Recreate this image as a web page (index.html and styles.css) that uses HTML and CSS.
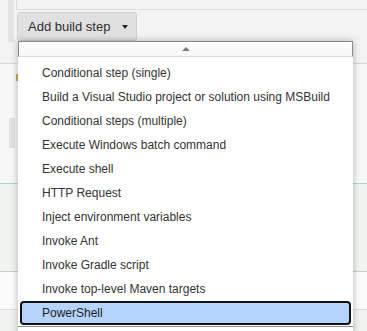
FILE: index.html
```html
<!DOCTYPE html>
<html>
<head>
<meta charset="utf-8">
<link rel="stylesheet" href="styles.css">
</head>
<body>
<div class="page">
  <div class="top">
    <div class="bar"></div>
    <div class="main">
      <div class="panel"></div>
      <button class="btn">Add build step<span class="caret"></span></button>
    </div>
  </div>
  <div class="sec sec1">
    <div class="mark"></div>
    <div class="block"></div>
  </div>
  <div class="sec sec2"></div>
  <div class="sec sec3"></div>
  <div class="sec sec4"></div>

  <div class="menu">
    <div class="scroll-up"><span class="up"></span></div>
    <ul class="items">
      <li>Conditional step (single)</li>
      <li>Build a Visual Studio project or solution using MSBuild</li>
      <li>Conditional steps (multiple)</li>
      <li>Execute Windows batch command</li>
      <li>Execute shell</li>
      <li>HTTP Request</li>
      <li>Inject environment variables</li>
      <li>Invoke Ant</li>
      <li>Invoke Gradle script</li>
      <li>Invoke top-level Maven targets</li>
      <li class="selected">PowerShell</li>
    </ul>
    <div class="scroll-down"></div>
  </div>
</div>
</body>
</html>
```
FILE: styles.css
```css
html, body {
  margin: 0;
  padding: 0;
}
body {
  background: #f3f3f3;
  font-family: "Liberation Sans", Arial, sans-serif;
  overflow: hidden;
}
.page {
  position: relative;
  width: 367px;
  height: 331px;
  overflow: hidden;
}
.top {
  height: 63px;
  display: flex;
  align-items: flex-start;
}
.bar {
  margin-left: 8px;
  width: 6px;
  height: 42px;
  background: #e3e3e3;
}
.main {
  margin-left: 2px;
  flex: 1;
}
.panel {
  height: 9px;
  border-left: 1px solid #dcdcdc;
  border-bottom: 1px solid #dcdcdc;
  background: #f4f4f4;
}
.btn {
  margin: 2px 0 0 1px;
  height: 29px;
  display: flex;
  align-items: center;
  padding: 0 8px 0 10px;
  background: #e0e0e0;
  border: 1px solid #cfcfcf;
  border-radius: 3px;
  font-family: "Liberation Sans", Arial, sans-serif;
  font-size: 13px;
  color: #2e2e35;
}
.caret {
  display: inline-block;
  margin-left: 12px;
  margin-top: 1px;
  border-left: 3px solid transparent;
  border-right: 3px solid transparent;
  border-top: 4px solid #222;
}
.sec {
  border-top: 1px solid #d8d8d8;
}
.sec1 {
  height: 120px;
  background: #f7f7f7;
  box-sizing: border-box;
}
.mark {
  margin: 10px 0 0 16px;
  width: 2px;
  height: 7px;
  background: #d6a35a;
}
.block {
  margin: 37px 0 0 9px;
  width: 6px;
  height: 30px;
  background: #e2e2e2;
}
.sec2 {
  height: 87px;
  background: #f1f4ee;
  border-top-color: #a9d9c2;
}
.sec3 {
  height: 37px;
  background: #fafafa;
  border-top-color: #cccccc;
}
.sec4 {
  height: 40px;
  background: #f1f4ee;
  border-top-color: #dddddd;
}
.menu {
  position: absolute;
  left: 18px;
  top: 41px;
  width: 335px;
  background: #fff;
  box-shadow: 0 0 7px rgba(0, 0, 0, 0.28);
}
.scroll-up {
  border: 1px solid #8a8a8a;
  border-bottom: 1px solid #dddddd;
  background: linear-gradient(#ffffff, #f6f6f6);
  display: flex;
  justify-content: center;
  align-items: center;
  height: 14px;
}
.up {
  display: block;
  border-left: 4px solid transparent;
  border-right: 4px solid transparent;
  border-bottom: 4px solid #7a7a7a;
  margin-left: 1px;
}
.items {
  list-style: none;
  margin: 0;
  padding: 4px 0 1px 0;
}
.items li {
  height: 24px;
  line-height: 24px;
  padding-left: 24px;
  font-size: 12px;
  color: #333;
  white-space: nowrap;
}
.items li.selected {
  margin: 0 2px;
  padding-left: 20px;
  height: 20px;
  line-height: 20px;
  background: #b4d4fd;
  border: 2px solid #111;
  border-radius: 4px;
  color: #222;
}
.scroll-down {
  height: 20px;
  border-top: 1px solid #8a8a8a;
}
```
